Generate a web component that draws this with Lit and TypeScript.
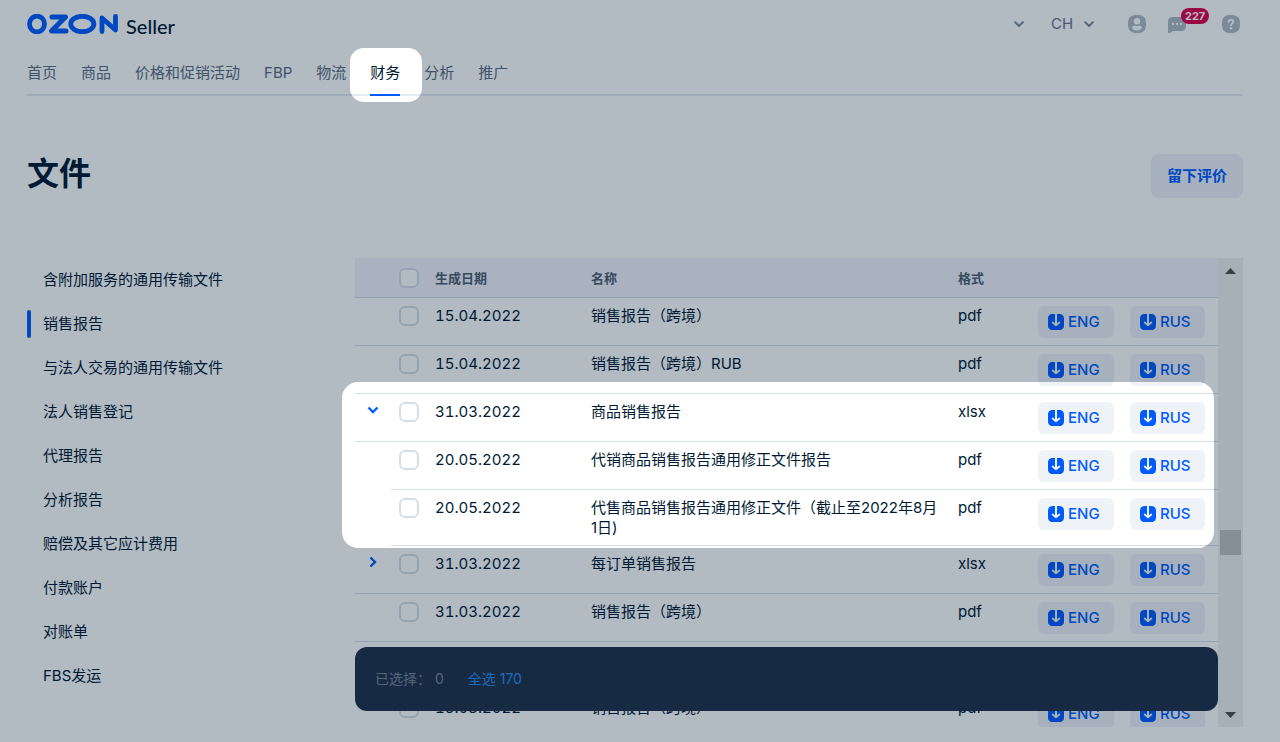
import { LitElement, html, css, svg, nothing } from "lit";
import { customElement, property } from "lit/decorators.js";
import { classMap } from "lit/directives/class-map.js";

const NAV = ["首页", "商品", "价格和促销活动", "FBP", "物流", "财务", "分析", "推广"];

const SECTIONS = [
  "含附加服务的通用传输文件",
  "销售报告",
  "与法人交易的通用传输文件",
  "法人销售登记",
  "代理报告",
  "分析报告",
  "赔偿及其它应计费用",
  "付款账户",
  "对账单",
  "FBS发运",
];

interface Doc {
  date: string;
  name: string;
  format: string;
  toggle?: "open" | "closed";
  child?: boolean;
}

const DOCS: Doc[] = [
  { date: "15.04.2022", name: "销售报告（跨境）", format: "pdf" },
  { date: "15.04.2022", name: "销售报告（跨境）RUB", format: "pdf" },
  { date: "31.03.2022", name: "商品销售报告", format: "xlsx", toggle: "open" },
  { date: "20.05.2022", name: "代销商品销售报告通用修正文件报告", format: "pdf", child: true },
  { date: "20.05.2022", name: "代售商品销售报告通用修正文件（截止至2022年8月1日)", format: "pdf", child: true },
  { date: "31.03.2022", name: "每订单销售报告", format: "xlsx", toggle: "closed" },
  { date: "31.03.2022", name: "销售报告（跨境）", format: "pdf" },
  { date: "15.03.2022", name: "销售报告（跨境）RUB", format: "pdf" },
  { date: "15.03.2022", name: "销售报告（跨境）", format: "pdf" },
];

const chevron = svg`<path d="M1.500 1.500 6 6l4.500-4.500" fill="none" stroke="currentColor" stroke-width="2.300"/>`;
const smallChevron = svg`<path d="M1.200 1.200 5 5l3.800-3.800" fill="none" stroke="currentColor" stroke-width="2" stroke-linecap="round" stroke-linejoin="round"/>`;

@customElement("doc-table")
export class DocTable extends LitElement {
  @property({ attribute: false }) docs: Doc[] = [];

  static styles = css`
    :host { display: block; }
    .table {
      width: 100%;
      table-layout: fixed;
      border-collapse: separate;
      border-spacing: 0;
      font-size: 15px;
      line-height: 20px;
      color: #001a34;
    }
    .c-toggle, .c-check { width: 36px; }
    .c-date { width: 156px; }
    .c-format { width: 80px; }
    .c-eng { width: 92px; }
    .c-rus { width: 96px; }
    .head {
      height: 20px;
      padding: 10px 8px 9px;
      background: #f4f4fd;
      border-bottom: 1px solid #d4dee9;
      font-size: 13px;
      font-weight: 600;
      text-align: left;
      color: #4d5f71;
    }
    .cell {
      padding: 8px 8px 7px;
      vertical-align: top;
      text-align: left;
      border-bottom: 1px solid #d4dee9;
    }
    .date { font-variant-numeric: tabular-nums; }
    .indent { border-bottom-color: transparent; }
    .check {
      appearance: none;
      display: block;
      box-sizing: border-box;
      width: 20px;
      height: 20px;
      margin: 0;
      border: 2px solid #d4dee9;
      border-radius: 6px;
      background: #fff;
    }
    .check:checked { background: #005bff; border-color: #005bff; }
    .toggle {
      display: flex;
      align-items: center;
      justify-content: center;
      width: 20px;
      height: 16px;
      padding: 0;
      border: 0;
      background: none;
      color: #005bff;
    }
    .turned { transform: rotate(-90deg); }
    .load {
      display: inline-flex;
      align-items: center;
      gap: 4px;
      height: 32px;
      padding: 0 14px 0 10px;
      border: 0;
      border-radius: 6px;
      background: #eff3f8;
      color: #005bff;
      font: 500 15px/20px Inter, "Noto Sans CJK SC", sans-serif;
      vertical-align: top;
    }
  `;

  private load(lang: string) {
    return html`<button class="load" type="button">
      <svg width="16" height="16" viewBox="0 0 16 16" aria-hidden="true">
        <path d="M5 0h2v10h2V0h2c3.500 0 5 1.500 5 5v6c0 3.500-1.500 5-5 5H5c-3.500 0-5-1.500-5-5V5c0-3.500 1.500-5 5-5z" fill="currentColor"/>
        <path d="M4.700 8.500 8 11.200l3.300-2.700" fill="none" stroke="#eff3f8" stroke-width="1.800" stroke-linecap="round" stroke-linejoin="round"/>
      </svg>${lang}</button>`;
  }

  render() {
    return html`<table class="table">
      <colgroup>
        <col class="c-toggle"><col class="c-check"><col class="c-date"><col>
        <col class="c-format"><col class="c-eng"><col class="c-rus">
      </colgroup>
      <thead>
        <tr>
          <th class="head"></th>
          <th class="head"><input class="check" type="checkbox" aria-label="全选"></th>
          <th class="head">生成日期</th>
          <th class="head">名称</th>
          <th class="head">格式</th>
          <th class="head"></th>
          <th class="head"></th>
        </tr>
      </thead>
      <tbody>
        ${this.docs.map(
          (d) => html`<tr>
            <td class=${classMap({ cell: true, indent: !!d.child })}>
              ${d.toggle
                ? html`<button class="toggle" type="button" aria-label=${d.name} aria-expanded=${d.toggle === "open"}>
                    <svg class=${d.toggle === "open" ? "" : "turned"} width="12" height="8" viewBox="0 0 12 8">${chevron}</svg>
                  </button>`
                : nothing}
            </td>
            <td class="cell"><input class="check" type="checkbox" aria-label=${d.name}></td>
            <td class="cell date">${d.date}</td>
            <td class="cell">${d.name}</td>
            <td class="cell">${d.format}</td>
            <td class="cell">${this.load("ENG")}</td>
            <td class="cell">${this.load("RUS")}</td>
          </tr>`
        )}
      </tbody>
    </table>`;
  }
}

@customElement("app-root")
export class AppRoot extends LitElement {
  static styles = css`
    :host {
      display: flex;
      flex-direction: column;
      box-sizing: border-box;
      position: relative;
      height: 100vh;
      padding: 0 37px 15px 27px;
      overflow: hidden;
      background: #fff;
      color: #001a34;
      font-family: Inter, "Noto Sans CJK SC", sans-serif;
      font-size: 15px;
      line-height: 20px;
    }
    .top {
      display: flex;
      align-items: center;
      justify-content: space-between;
      height: 48px;
      flex: none;
    }
    .brand {
      display: flex;
      align-items: center;
      gap: 8px;
      color: #001a34;
      text-decoration: none;
    }
    .seller { font: 500 20px/24px Lato, sans-serif; padding-top: 4px; }
    .tools { display: flex; align-items: center; padding-right: 3px; }
    .icon {
      position: relative;
      display: flex;
      padding: 0;
      border: 0;
      background: none;
      color: #b1b9c4;
    }
    .account { color: #808d9a; margin-right: 27px; }
    .lang { display: flex; align-items: center; margin-right: 34px; color: #808d9a; }
    .select {
      appearance: none;
      width: 33px;
      padding: 0;
      border: 0;
      background: none;
      color: #66768a;
      font: 400 15px/20px Inter, sans-serif;
    }
    .chat { margin: 0 36px 0 22px; }
    .badge {
      position: absolute;
      left: 13px;
      top: -7px;
      padding: 0 4px;
      border-radius: 8px;
      background: #df004c;
      color: #fff;
      font: 700 11px/16px Inter, sans-serif;
    }
    .nav {
      display: flex;
      gap: 24px;
      flex: none;
      border-bottom: 2px solid #e6ecf2;
    }
    .link {
      padding: 15px 0 11px;
      margin-bottom: -2px;
      border-bottom: 2px solid transparent;
      color: #5c6c80;
      text-decoration: none;
    }
    .current { color: #001a34; border-color: #005bff; }
    .heading {
      display: flex;
      align-items: flex-start;
      justify-content: space-between;
      flex: none;
      margin-top: 58px;
    }
    .title { margin: 0; font-size: 32px; line-height: 40px; font-weight: 700; }
    .feedback {
      padding: 12px 16px;
      border: 0;
      border-radius: 8px;
      background: #eff3f8;
      color: #005bff;
      font: 600 15px/20px Inter, "Noto Sans CJK SC", sans-serif;
    }
    .body { display: flex; flex: 1; min-height: 0; margin-top: 60px; }
    .side { display: flex; flex-direction: column; width: 328px; flex: none; }
    .section {
      display: flex;
      align-items: center;
      height: 44px;
      gap: 12px;
      color: #001a34;
      text-decoration: none;
    }
    .section::before { content: ""; width: 4px; height: 28px; border-radius: 2px; }
    .chosen::before { background: #005bff; }
    .pane { position: relative; flex: 1; min-width: 0; overflow: hidden; }
    .bar {
      position: absolute;
      left: 0;
      right: 0;
      bottom: 16px;
      display: flex;
      gap: 24px;
      padding: 22px 20px;
      border-radius: 12px;
      background: #21324b;
      color: #7a8796;
      font-size: 14px;
    }
    .all { color: #2c8fed; text-decoration: none; }
    .scroll {
      display: flex;
      flex-direction: column;
      align-items: center;
      width: 25px;
      flex: none;
      background: #f0f0f0;
    }
    .arrow {
      display: flex;
      align-items: center;
      justify-content: center;
      width: 25px;
      height: 25px;
      padding: 0;
      border: 0;
      background: none;
      color: #505050;
    }
    .before { flex: 247; }
    .thumb { width: 21px; height: 25px; background: #c1c1c1; }
    .after { flex: 147; }
    .shade {
      position: absolute;
      inset: 0;
      width: 100%;
      height: 100%;
      pointer-events: none;
    }
    .rows-hole { width: calc(100% - 408px); }
  `;

  render() {
    return html`
      <header class="top">
        <a class="brand" href="#" aria-label="OZON Seller">
          <svg width="91" height="20" viewBox="0 0 91 20" fill="none" stroke="#005bff" stroke-linecap="round" stroke-linejoin="round">
            <ellipse cx="10" cy="10" rx="7.500" ry="7.900" stroke-width="4.800"/>
            <polyline points="25,3 38.5,3 24.500,17 39,17" stroke-width="5"/>
            <ellipse cx="55.300" cy="10" rx="11.600" ry="7.700" stroke-width="4.800"/>
            <polyline points="75,17.500 75,4 88.500,16 88.500,2.500" stroke-width="4.800"/>
          </svg>
          <span class="seller">Seller</span>
        </a>
        <div class="tools">
          <button class="icon account" type="button" aria-label="Account">
            <svg width="10" height="6" viewBox="0 0 10 6">${smallChevron}</svg>
          </button>
          <label class="lang">
            <select class="select" aria-label="Language"><option>CH</option></select>
            <svg width="10" height="6" viewBox="0 0 10 6">${smallChevron}</svg>
          </label>
          <button class="icon" type="button" aria-label="Profile">
            <svg width="18" height="18" viewBox="0 0 18 18">
              <path d="M9 0c6.500 0 9 2.500 9 9s-2.500 9-9 9-9-2.500-9-9 2.500-9 9-9z" fill="currentColor"/>
              <circle cx="9" cy="6.300" r="3.200" fill="#fff"/>
              <path d="M4 12c1-1 2-1.500 3-1.500 1.300.7 2.700.7 4 0 1 0 2 .5 3 1.500 0 2.300-2 3.500-5 3.500S4 14.300 4 12z" fill="#fff"/>
            </svg>
          </button>
          <button class="icon chat" type="button" aria-label="Messages">
            <svg width="18" height="18" viewBox="0 0 18 18">
              <path d="M5 2h8c3.500 0 5 1.500 5 5v4c0 3.500-1.500 5-5 5H5l-3 2H1c-.7 0-1-.3-1-1V7c0-3.500 1.500-5 5-5z" fill="currentColor"/>
              <path d="M4 8h2v2H4zM8 8h2v2H8zM12 8h2v2h-2z" fill="#fff"/>
            </svg>
            <span class="badge">227</span>
          </button>
          <button class="icon" type="button" aria-label="Help">
            <svg width="18" height="18" viewBox="0 0 18 18">
              <path d="M9 0c6.500 0 9 2.500 9 9s-2.500 9-9 9-9-2.500-9-9 2.500-9 9-9z" fill="currentColor"/>
              <path d="M6.700 6.800C6.700 5.500 7.600 4.800 9 4.800s2.300.8 2.300 2c0 1.700-2.300 1.600-2.300 3.400" fill="none" stroke="#fff" stroke-width="1.900" stroke-linecap="round"/>
              <circle cx="9" cy="13.200" r="1.200" fill="#fff"/>
            </svg>
          </button>
        </div>
      </header>
      <nav class="nav">
        ${NAV.map((n) => html`<a href="#" class=${classMap({ link: true, current: n === "财务" })}>${n}</a>`)}
      </nav>
      <div class="heading">
        <h1 class="title">文件</h1>
        <button class="feedback" type="button">留下评价</button>
      </div>
      <main class="body">
        <nav class="side">
          ${SECTIONS.map((s) => html`<a href="#" class=${classMap({ section: true, chosen: s === "销售报告" })}>${s}</a>`)}
        </nav>
        <div class="pane">
          <doc-table .docs=${DOCS}></doc-table>
          <div class="bar">
            <span>已选择： 0</span>
            <a class="all" href="#">全选 170</a>
          </div>
        </div>
        <div class="scroll">
          <button class="arrow" type="button" aria-label="Up">
            <svg width="11" height="6" viewBox="0 0 11 6"><path d="M0 6 5.500 0 11 6z" fill="currentColor"/></svg>
          </button>
          <div class="before"></div>
          <div class="thumb"></div>
          <div class="after"></div>
          <button class="arrow" type="button" aria-label="Down">
            <svg width="11" height="6" viewBox="0 0 11 6"><path d="M0 0 5.500 6 11 0z" fill="currentColor"/></svg>
          </button>
        </div>
      </main>
      <svg class="shade" aria-hidden="true">
        <mask id="holes">
          <rect width="100%" height="100%" fill="#fff"/>
          <rect x="350" y="48" width="72" height="54" rx="14" fill="#000"/>
          <rect class="rows-hole" x="342" y="382" height="166" rx="16" fill="#000"/>
        </mask>
        <rect width="100%" height="100%" fill="#001a34" fill-opacity="0.300" mask="url(#holes)"/>
      </svg>
    `;
  }
}
